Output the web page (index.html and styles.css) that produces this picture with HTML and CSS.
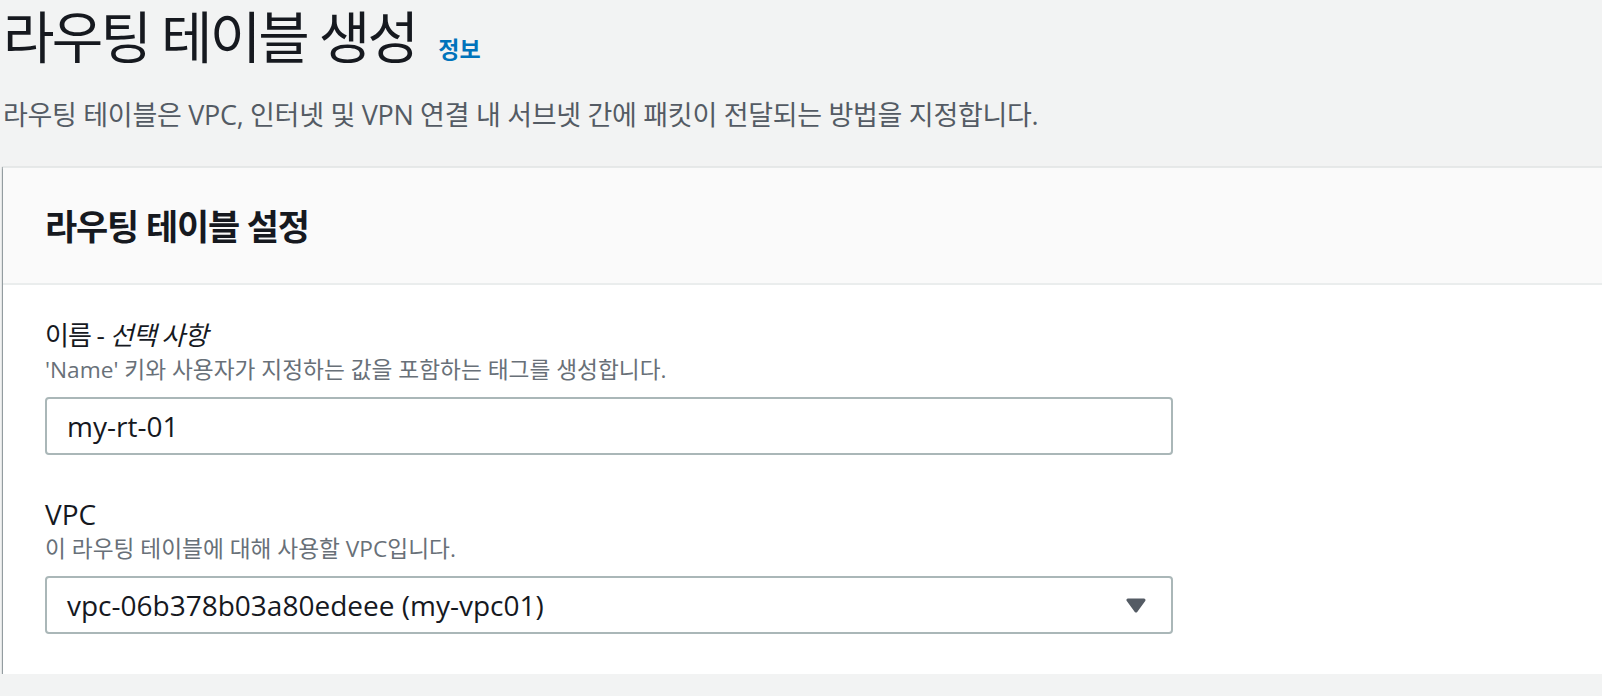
FILE: index.html
```html
<!DOCTYPE html>
<html lang="ko">
<head>
    <meta charset="UTF-8">
    <meta name="viewport" content="width=device-width, initial-scale=1.0">
    <title>라우팅 테이블 생성</title>
    <link rel="stylesheet" href="styles.css">
</head>
<body>
    <div class="page">
        <div class="page-head">
            <h1>라우팅 테이블 생성</h1>
            <a class="info-link" href="#">정보</a>
        </div>
        <p class="page-desc">라우팅 테이블은 VPC, 인터넷 및 VPN 연결 내 서브넷 간에 패킷이 전달되는 방법을 지정합니다.</p>

        <div class="card">
            <div class="card-header">
                <h2>라우팅 테이블 설정</h2>
            </div>
            <div class="card-body">
                <div class="field">
                    <label class="field-label" for="rt-name">이름 - <i>선택 사항</i></label>
                    <div class="field-hint">'Name' 키와 사용자가 지정하는 값을 포함하는 태그를 생성합니다.</div>
                    <input class="text-input" id="rt-name" type="text" value="my-rt-01">
                </div>

                <div class="field field-vpc">
                    <label class="field-label field-label-en">VPC</label>
                    <div class="field-hint">이 라우팅 테이블에 대해 사용할 VPC입니다.</div>
                    <div class="select-box">
                        <span>vpc-06b378b03a80edeee (my-vpc01)</span>
                        <svg class="caret" width="20" height="15" viewBox="0 0 20 15">
                            <path d="M2 2 H18 L10 13 Z" fill="#545b64" stroke="#545b64" stroke-width="3" stroke-linejoin="round"/>
                        </svg>
                    </div>
                </div>
            </div>
        </div>
    </div>
</body>
</html>
```

FILE: styles.css
```css
body {
    margin: 0;
    padding: 0;
    background-color: #f2f3f3;
    font-family: "Open Sans", "Noto Sans CJK KR", sans-serif;
    color: #16191f;
    overflow: hidden;
}

.page {
    padding-left: 3px;
}

.page-head {
    display: flex;
    align-items: baseline;
    gap: 22px;
}
.page-head h1 {
    margin: 0;
    font-size: 56px;
    font-weight: 400;
    line-height: 72px;
    letter-spacing: -2.8px;
    color: #16191f;
}
.info-link {
    font-size: 23px;
    font-weight: 700;
    color: #0073bb;
    text-decoration: none;
}

.page-desc {
    margin: 25px 0 0 0;
    font-size: 27px;
    line-height: 36px;
    letter-spacing: -0.3px;
    color: #545b64;
}

.card {
    margin-top: 34px;
    margin-right: -20px;
    background-color: #fff;
    border-top: 1px solid #e6e9e9;
    box-shadow: 0 2px 1px rgba(0, 28, 36, 0.5), 0 3px 2px rgba(0, 28, 36, 0.15), -1px 0 1px rgba(0, 28, 36, 0.3);
}
.card-header {
    padding: 39px 42px 36px 42px;
    background-color: #fafafa;
    border-bottom: 2px solid #eaeded;
}
.card-header h2 {
    margin: 0;
    font-size: 35px;
    font-weight: 700;
    line-height: 40px;
    letter-spacing: -1.2px;
}

.card-body {
    padding: 34px 42px 40px 42px;
}

.field-vpc {
    margin-top: 43px;
}
.field-label {
    display: block;
    font-size: 26px;
    line-height: 33px;
    letter-spacing: -1px;
    color: #16191f;
}
.field-label-en {
    font-size: 28px;
    letter-spacing: 0;
}
.field-hint {
    margin-top: 5px;
    font-size: 22.7px;
    line-height: 26px;
    color: #687078;
}

.text-input,
.select-box {
    box-sizing: border-box;
    width: 1128px;
    height: 58px;
    margin-top: 14px;
    padding: 0 20px;
    border: 2px solid #aab7b8;
    border-radius: 4px;
    background-color: #fff;
    font-family: "Open Sans", "Noto Sans CJK KR", sans-serif;
    font-size: 28px;
    color: #16191f;
}
.text-input {
    display: block;
    outline: none;
}
.select-box {
    display: flex;
    align-items: center;
    justify-content: space-between;
    padding-right: 25px;
}
.caret {
    display: block;
}
```
